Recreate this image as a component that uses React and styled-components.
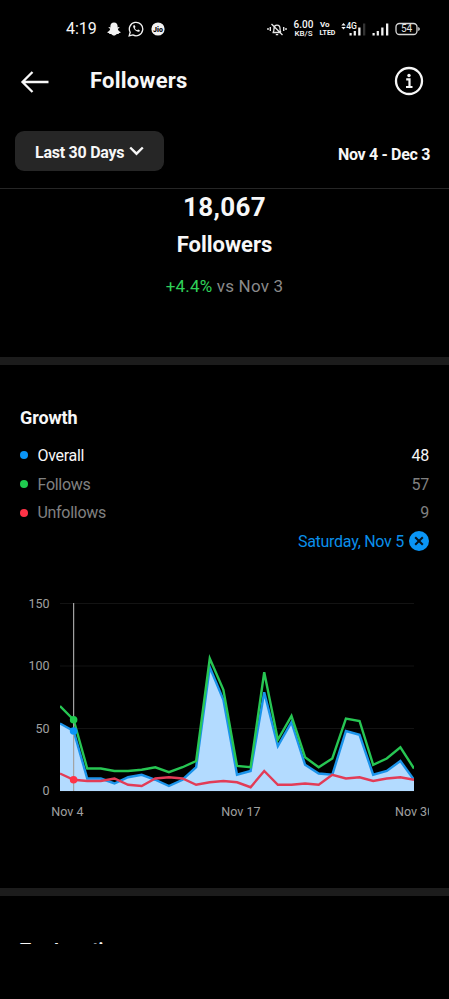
import React, { useState } from 'react'
import styled, { createGlobalStyle } from 'styled-components'

const GlobalStyle = createGlobalStyle`
* {
  box-sizing: border-box;
}
body {
  margin: 0;
  background: #000;
  color: #f7f7f7;
  font-family: Roboto, "Liberation Sans", sans-serif;
}
svg {
  display: block;
  flex: none;
}
`

const Screen = styled.div`
width: 449px;
height: 999px;
background: #000;
display: flex;
flex-direction: column;
overflow: hidden;
`

const StatusBar = styled.div`
height: 58px;
padding: 0 29px 0 66px;
display: flex;
align-items: center;
justify-content: space-between;
`
const StatusGroup = styled.div`
display: flex;
align-items: center;
gap: ${props => props.gap}px;
`
const Clock = styled.span`
font-size: 16px;
line-height: 20px;
width: 33px;
margin-right: 1px;
white-space: nowrap;
`
const Stacked = styled.div`
display: flex;
flex-direction: column;
align-items: center;
width: ${props => props.width}px;
font-size: ${props => props.size}px;
font-weight: ${props => props.weight || 500};
line-height: ${props => props.line}px;
white-space: nowrap;
`
const StackedTop = styled.span`
font-size: ${props => props.size}px;
align-self: ${props => props.align || "center"};
`

const Header = styled.div`
height: 46px;
padding: 0 24px 0 20px;
display: flex;
align-items: center;
`
const HeaderTitle = styled.div`
flex: 1;
margin-left: 41px;
font-size: 22px;
font-weight: 700;
line-height: 28px;
letter-spacing: 0.2px;
`
const IconButton = styled.button`
border: none;
padding: 0;
background: none;
color: inherit;
cursor: pointer;
`

const FilterBar = styled.div`
height: 85px;
padding: 27px 19px 0 15px;
border-bottom: 1px solid #262626;
display: flex;
align-items: flex-start;
justify-content: space-between;
`
const RangeButton = styled.button`
width: 149px;
height: 40px;
padding: 2px 0 0 20px;
border: none;
border-radius: 9px;
background: #262626;
color: inherit;
display: flex;
align-items: center;
gap: 5px;
font-family: inherit;
font-size: 16px;
font-weight: 700;
letter-spacing: -0.25px;
white-space: nowrap;
cursor: pointer;
`
const RangeDates = styled.div`
margin-top: 14px;
font-size: 16px;
font-weight: 700;
line-height: 20px;
letter-spacing: -0.33px;
`

const Summary = styled.div`
height: 168px;
display: flex;
flex-direction: column;
align-items: center;
`
const Total = styled.div`
font-size: 26px;
font-weight: 700;
line-height: 36px;
letter-spacing: 0.3px;
`
const TotalLabel = styled.div`
margin-top: 4px;
font-size: 22px;
font-weight: 700;
line-height: 32px;
`
const Change = styled.div`
margin-top: 13px;
font-size: 17px;
line-height: 24px;
letter-spacing: 0.2px;
color: #8a8a8a;
`
const Gain = styled.span`
color: #2fd159;
`

const Divider = styled.div`
height: 8px;
flex: none;
background: #1c1c1c;
`

const Growth = styled.div`
height: 523px;
padding: 41px 20px 0;
display: flex;
flex-direction: column;
`
const SectionTitle = styled.div`
font-size: 18px;
font-weight: 700;
line-height: 24px;
letter-spacing: -0.1px;
`
const Legend = styled.div`
margin-top: 11px;
`
const LegendRow = styled.div`
height: 28.7px;
display: flex;
align-items: center;
font-size: 16px;
letter-spacing: -0.3px;
color: ${props => props.active ? "#f7f7f7" : "#808080"};
`
const Dot = styled.span`
width: 8px;
height: 8px;
margin-right: 9.5px;
border-radius: 50%;
background: ${props => props.color};
`
const LegendName = styled.span`
flex: 1;
`
const SelectedDay = styled.div`
height: 28px;
display: flex;
align-items: center;
justify-content: flex-end;
gap: 5px;
color: #0a8fea;
font-size: 16px;
letter-spacing: -0.27px;
`
const ChartBox = styled.div`
margin-top: 37.9px;
`

const Locations = styled.div`
height: 48px;
padding-top: 42px;
padding-left: 20px;
overflow: hidden;
`

const overall = [54, 48, 10, 10, 6, 11, 13, 9, 4, 9, 19, 99, 73, 13, 16, 79, 36, 55, 21, 14, 13, 48, 45, 13, 16, 24, 9]
const follows = [68, 57, 18, 18, 16, 16, 17, 19, 15, 19, 24, 106, 81, 20, 19, 95, 41, 60, 27, 19, 26, 58, 56, 21, 26, 35, 18]
const unfollows = [14, 9, 8, 8, 10, 5, 4, 10, 11, 10, 5, 7, 8, 7, 3, 16, 5, 5, 6, 5, 13, 10, 11, 8, 10, 11, 9]

const series = [
  { name: "Overall", color: "#0a95f6", data: overall },
  { name: "Follows", color: "#1fcc4f", data: follows },
  { name: "Unfollows", color: "#ff3347", data: unfollows },
]

// plot area inside the 409px wide chart
const LEFT = 40
const RIGHT = 394
const BASE = 198
const px = (i) => LEFT + (i * (RIGHT - LEFT)) / 26
const py = (v) => BASE - v * 1.25
const line = (data) => data.map((v, i) => `${px(i)},${py(v)}`).join(" ")

const Chart = ({ selected }) => (
  <svg width="409" height="230" viewBox="0 0 409 230" fontFamily="Roboto, sans-serif" fontSize="12.5" fill="#a0a0a0">
    <defs>
      <clipPath id="plot">
        <rect x={LEFT} y="0" width={RIGHT - LEFT} height={BASE} />
      </clipPath>
    </defs>
    {[0, 50, 100, 150].map((v) => (
      <g key={v}>
        <text x="29.5" y={py(v) + 4} textAnchor="end">{v}</text>
        <line x1={LEFT} x2={RIGHT} y1={py(v)} y2={py(v)} stroke="#131313" />
      </g>
    ))}
    <g clipPath="url(#plot)" fill="none" strokeWidth="2.4">
      <polygon points={`${LEFT},${BASE} ${line(overall)} ${RIGHT},${BASE}`} fill="#b3dbff" />
      <polyline points={line(overall)} stroke="#1a93ea" />
      <polyline points={line(follows)} stroke="#27c653" />
      <polyline points={line(unfollows)} stroke="#e23c57" />
    </g>
    {selected !== null && (
      <g>
        <line x1={px(selected)} x2={px(selected)} y1="10" y2={BASE} stroke="#a3a3a3" strokeWidth="1.2" />
        {[...series].map((s) => (
          <circle key={s.name} cx={px(selected)} cy={py(s.data[selected])} r="3.8" fill={s.color} />
        ))}
      </g>
    )}
    <text x="31.3" y="223">Nov 4</text>
    <text x="201.3" y="223">Nov 17</text>
    <text x="375" y="223">Nov 30</text>
  </svg>
)

const SnapIcon = () => (
  <svg width="14" height="14" viewBox="0 0 14 14" fill="#f2f2f2">
    <path d="M7 .5c2.3 0 3.6 1.6 3.6 3.6v1.3l1.4-.3c.7.2.5.9-.1 1.1l-1.1.5c.3 1.7 1.3 2.8 2.8 3.2.3.7-.6 1-1.6 1.2l-.4.9-1.7-.1C9 12.7 8.3 13.4 7 13.4s-2-.7-2.9-1.5l-1.7.1-.4-.9C1 10.9.1 10.6.4 9.9c1.5-.4 2.5-1.5 2.8-3.2l-1.1-.5c-.6-.2-.8-.9-.1-1.1l1.4.3V4.1C3.4 2.1 4.7.5 7 .5z" />
  </svg>
)

const WhatsappIcon = () => (
  <svg width="16" height="16" viewBox="0 0 16 16" fill="none" stroke="#f2f2f2">
    <path d="M1.2 14.8l1-3.5A6.7 6.7 0 1 1 4.8 13.9z" strokeWidth="1.3" />
    <path d="M5.6 4.3c-2 1.9 3.4 8 5.9 6.2l.3-1.2-1.7-.9-.9.9c-1.1-.4-2-1.3-2.5-2.4l.8-.9-.8-1.7z" fill="#f2f2f2" stroke="none" />
  </svg>
)

const JioIcon = () => (
  <svg width="14" height="14" viewBox="0 0 14 14">
    <circle cx="7" cy="7" r="6.6" fill="#f2f2f2" />
    <text x="7" y="9.5" textAnchor="middle" fontFamily="Roboto, sans-serif" fontWeight="900" fontSize="7" fill="#000">Jio</text>
  </svg>
)

const MutedBellIcon = () => (
  <svg width="20" height="14" viewBox="0 0 20 14" fill="none" stroke="#e6e6e6" strokeWidth="1.3">
    <path d="M5.5 10.5H14M6 10.5c1-1 1-2 1-4 0-4.5 6-4.5 6 0 0 2 0 3 1 4M8.8 12.6h2.4M4.5 2l11 11" />
    <path d="M3.3 5v4M1 6v2M16.7 5v4M19 6v2" strokeWidth="1.4" />
  </svg>
)

const SignalIcon = ({ network }) => (
  <svg width={network ? 25 : 17} height="14" viewBox={network ? "0 0 25 14" : "8 0 17 14"} fill="#f2f2f2">
    {network && (
      <>
        <path d="M.3 3.5L2.5 1l2.2 2.5zM.3 5L2.5 7.5 4.7 5z" />
        <text x="5.2" y="7.3" fontFamily="Roboto, sans-serif" fontWeight="500" fontSize="8.6">4G</text>
      </>
    )}
    <rect x="8.5" y="11" width="2.2" height="2.5" />
    <rect x="12.7" y="9" width="2.2" height="4.5" />
    <rect x="17.2" y="5.5" width="2.3" height="8" />
    <rect x="22" y="1.5" width="2.3" height="12" fill={network ? "#333" : "#f2f2f2"} />
  </svg>
)

const BatteryIcon = () => (
  <svg width="25" height="14" viewBox="0 0 25 14">
    <rect x="1" y="1.5" width="21" height="11" rx="3.5" fill="none" stroke="#d8d8d8" strokeWidth="1.3" />
    <path d="M23.2 5v4l1.5-1V6z" fill="#d8d8d8" />
    <text x="11.5" y="10.4" textAnchor="middle" fontFamily="Roboto, sans-serif" fontSize="10" fill="#e0e0e0">54</text>
  </svg>
)

const BackIcon = () => (
  <svg width="29" height="26" viewBox="0 0 29 26" fill="none" stroke="#f7f7f7" strokeWidth="2.3">
    <path d="M12.5 4L2.5 14l10 10M2.5 14H28.5" />
  </svg>
)

const InfoIcon = () => (
  <svg width="32" height="32" viewBox="0 0 32 32" fill="none" stroke="#f7f7f7">
    <circle cx="16" cy="16" r="13" strokeWidth="2.3" />
    <path d="M13.2 14.3H16.5V22M13 22h6.5" strokeWidth="2.2" />
    <circle cx="16" cy="10.5" r="1.7" fill="#f7f7f7" stroke="none" />
  </svg>
)

const ChevronIcon = () => (
  <svg width="15" height="12" viewBox="0 0 15 12" fill="none" stroke="#f7f7f7" strokeWidth="2.4">
    <path d="M1.2 1.5l6.3 6.2 6.3-6.2" />
  </svg>
)

const CloseIcon = () => (
  <svg width="20" height="20" viewBox="0 0 20 20">
    <circle cx="10" cy="10" r="10" fill="#0a95f6" />
    <path d="M6.2 6.2l7.6 7.6M13.8 6.2l-7.6 7.6" stroke="#06121c" strokeWidth="2" />
  </svg>
)

const App = () => {
  const [selected, setSelected] = useState(1);
  const current = selected === null ? 26 : selected;

  return (
    <Screen>
      <GlobalStyle />
      <StatusBar>
        <StatusGroup gap={7}>
          <Clock>4:19</Clock>
          <SnapIcon />
          <WhatsappIcon />
          <JioIcon />
        </StatusGroup>
        <StatusGroup gap={6}>
          <MutedBellIcon />
          <Stacked width={21} size={8} line={9}>
            <StackedTop size={10}>6.00</StackedTop>
            <span>KB/S</span>
          </Stacked>
          <Stacked width={15} size={7} weight={700} line={8}>
            <StackedTop size={8} align="flex-start">Vo</StackedTop>
            <span>LTED</span>
          </Stacked>
          <SignalIcon network />
          <SignalIcon />
          <BatteryIcon />
        </StatusGroup>
      </StatusBar>

      <Header>
        <IconButton aria-label="Back"><BackIcon /></IconButton>
        <HeaderTitle>Followers</HeaderTitle>
        <IconButton aria-label="Info"><InfoIcon /></IconButton>
      </Header>

      <FilterBar>
        <RangeButton>
          Last 30 Days
          <ChevronIcon />
        </RangeButton>
        <RangeDates>Nov 4 - Dec 3</RangeDates>
      </FilterBar>

      <Summary>
        <Total>18,067</Total>
        <TotalLabel>Followers</TotalLabel>
        <Change><Gain>+4.4%</Gain> vs Nov 3</Change>
      </Summary>

      <Divider />

      <Growth>
        <SectionTitle>Growth</SectionTitle>
        <Legend>
          {series.map((s, i) => (
            <LegendRow key={s.name} active={i === 0 ? 1 : 0}>
              <Dot color={s.color} />
              <LegendName>{s.name}</LegendName>
              <span>{s.data[current]}</span>
            </LegendRow>
          ))}
        </Legend>
        <SelectedDay>
          {selected !== null && (
            <>
              <span>Saturday, Nov 5</span>
              <IconButton aria-label="Clear" onClick={() => setSelected(null)}><CloseIcon /></IconButton>
            </>
          )}
        </SelectedDay>
        <ChartBox>
          <Chart selected={selected} />
        </ChartBox>
      </Growth>

      <Divider />

      <Locations>
        <SectionTitle>Top Locations</SectionTitle>
      </Locations>
    </Screen>
  )
}

export default App
